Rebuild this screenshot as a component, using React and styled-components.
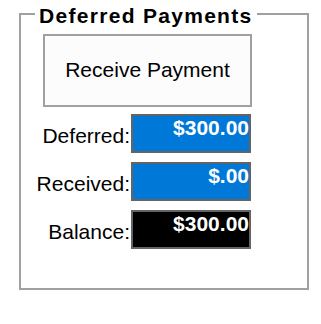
import React from "react";
import styled, { createGlobalStyle } from "styled-components";

const GlobalStyle = createGlobalStyle`
  html, body {
    margin: 0;
    padding: 0;
    background: #ffffff;
  }
  body {
    font-family: "Liberation Sans", Arial, sans-serif;
  }
`;

const rows = [
  { label: "Deferred:", value: "$300.00", tone: "blue" },
  { label: "Received:", value: "$.00", tone: "blue" },
  { label: "Balance:", value: "$300.00", tone: "black" },
];

function App() {
  return (
    <>
      <GlobalStyle />
      <Group>
        <Legend>Deferred Payments</Legend>
        <ActionButton type="button">Receive Payment</ActionButton>
        <Rows>
          {rows.map((row) => (
            <Row key={row.label}>
              <Label>{row.label}</Label>
              <Value $tone={row.tone}>{row.value}</Value>
            </Row>
          ))}
        </Rows>
      </Group>
    </>
  );
}

const Group = styled.section`
  position: relative;
  box-sizing: border-box;
  margin: 13px 0 0 19px;
  width: 290px;
  height: 277px;
  border: 2px solid #a0a0a0;
  padding: 19px 0 0 12px;
  display: flex;
  flex-direction: column;
`;

const Legend = styled.div`
  position: absolute;
  top: -11px;
  left: 14px;
  padding: 0 4px;
  background: #ffffff;
  color: #000000;
  font-size: 21px;
  font-weight: bold;
  line-height: 24px;
  letter-spacing: 1.3px;
  white-space: nowrap;
`;

const ActionButton = styled.button`
  box-sizing: border-box;
  margin: 0 0 0 10px;
  width: 209px;
  height: 73px;
  border: 2px solid #a0a0a0;
  background: #fcfcfc;
  color: #000000;
  font-family: "Liberation Sans", Arial, sans-serif;
  font-size: 21px;
  line-height: 24px;
  padding: 0;
  padding-bottom: 2px;
`;

const Rows = styled.div`
  margin-top: 7px;
  display: flex;
  flex-direction: column;
  gap: 9px;
`;

const Row = styled.div`
  display: grid;
  grid-template-columns: 98px 120px;
  align-items: start;
`;

const Label = styled.div`
  padding: 10px 1px 0 0;
  text-align: right;
  color: #000000;
  font-size: 21px;
  line-height: 24px;
  white-space: nowrap;
`;

const Value = styled.div`
  box-sizing: border-box;
  height: 39px;
  border: 2px solid #646464;
  background: ${(p) => (p.$tone === "black" ? "#000000" : "#0078d7")};
  color: #ffffff;
  font-size: 21px;
  font-weight: bold;
  line-height: 24px;
  text-align: right;
  overflow: hidden;
  white-space: nowrap;
`;

export default App;
